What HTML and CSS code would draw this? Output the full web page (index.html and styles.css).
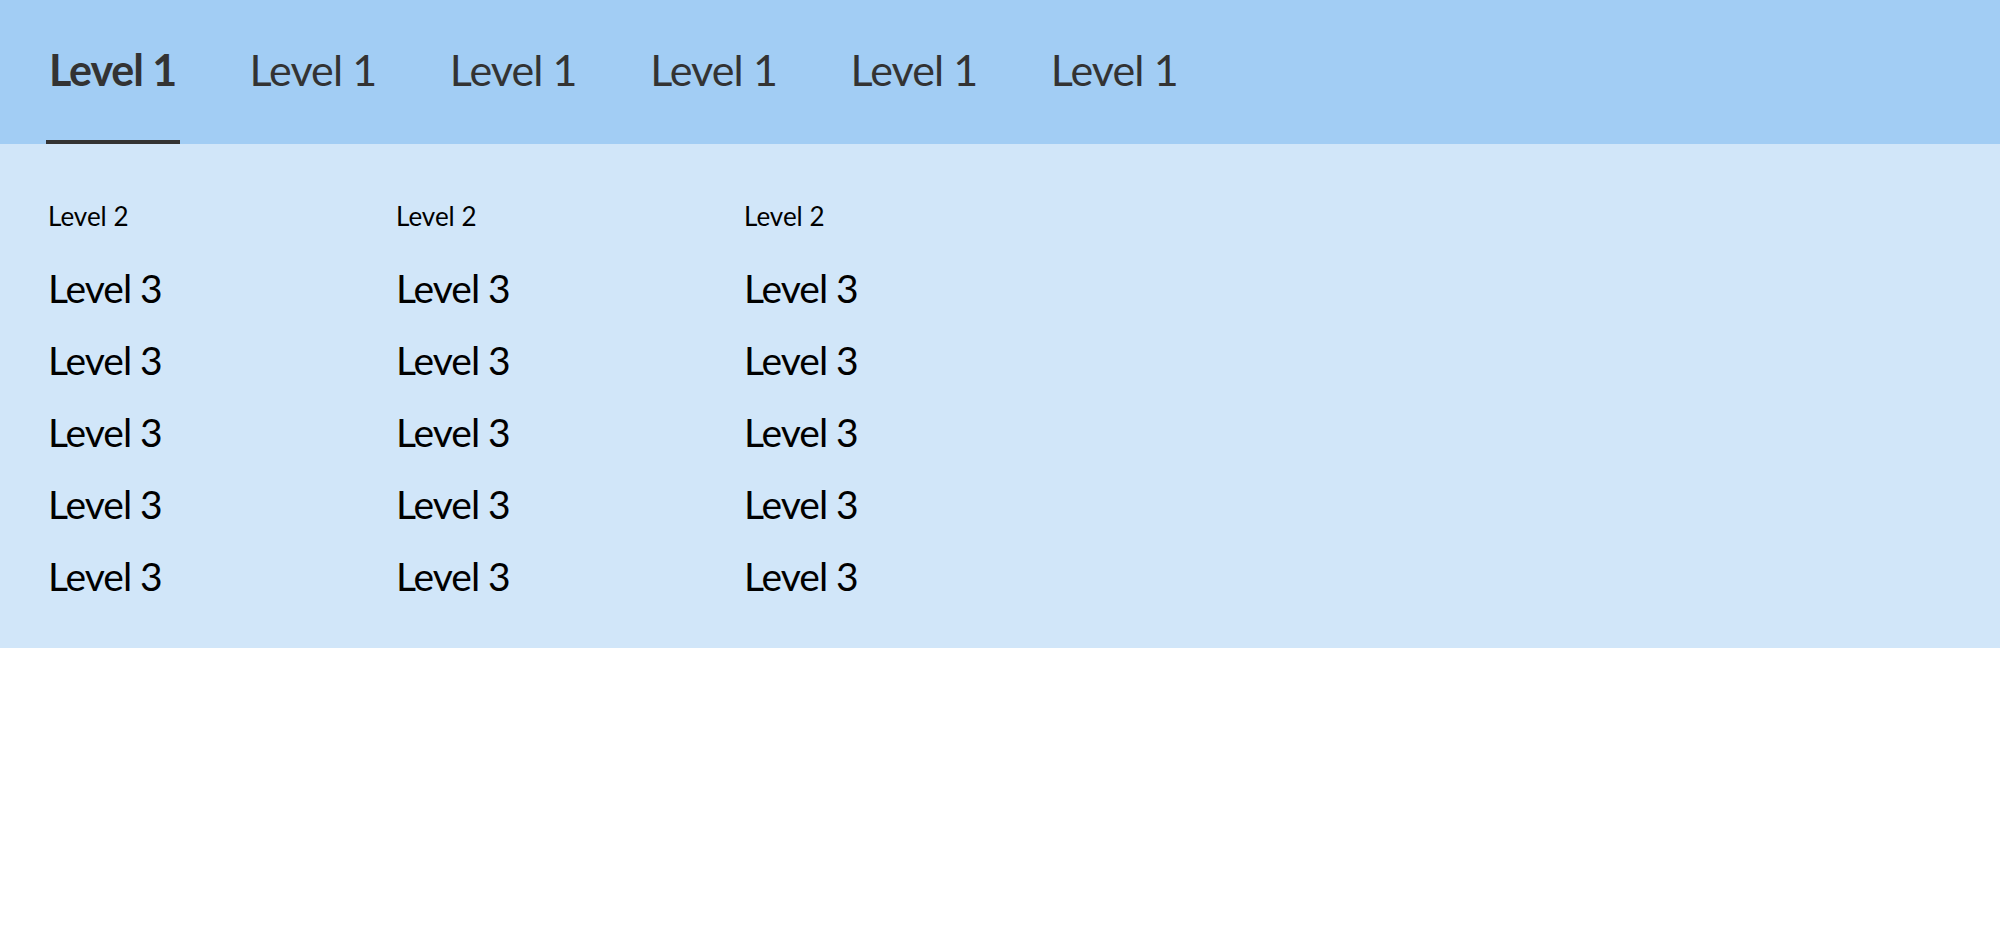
FILE: index.html
```html
<!DOCTYPE html>
<html lang="en">
<head>
  <meta charset="UTF-8">
  <meta name="viewport" content="width=device-width, initial-scale=1.0">
  <title>Mega menu</title>
  <link rel="stylesheet" href="styles.css">
</head>
<body>

  <!-- top level navigation -->
  <nav class="main-nav">
    <ul class="level1">
      <li><a href="#" class="active">Level 1</a></li>
      <li><a href="#">Level 1</a></li>
      <li><a href="#">Level 1</a></li>
      <li><a href="#">Level 1</a></li>
      <li><a href="#">Level 1</a></li>
      <li><a href="#">Level 1</a></li>
    </ul>
  </nav>

  <!-- dropdown panel -->
  <div class="submenu">
    <div class="column">
      <h3 class="level2">Level 2</h3>
      <ul class="level3">
        <li><a href="#">Level 3</a></li>
        <li><a href="#">Level 3</a></li>
        <li><a href="#">Level 3</a></li>
        <li><a href="#">Level 3</a></li>
        <li><a href="#">Level 3</a></li>
      </ul>
    </div>
    <div class="column">
      <h3 class="level2">Level 2</h3>
      <ul class="level3">
        <li><a href="#">Level 3</a></li>
        <li><a href="#">Level 3</a></li>
        <li><a href="#">Level 3</a></li>
        <li><a href="#">Level 3</a></li>
        <li><a href="#">Level 3</a></li>
      </ul>
    </div>
    <div class="column">
      <h3 class="level2">Level 2</h3>
      <ul class="level3">
        <li><a href="#">Level 3</a></li>
        <li><a href="#">Level 3</a></li>
        <li><a href="#">Level 3</a></li>
        <li><a href="#">Level 3</a></li>
        <li><a href="#">Level 3</a></li>
      </ul>
    </div>
  </div>

</body>
</html>
```

FILE: styles.css
```css
/* base */
body {
  margin: 0;
  font-family: Lato, 'Liberation Sans', sans-serif;
  background: #fff;
}

ul {
  list-style: none;
  margin: 0;
  padding: 0;
}

a {
  text-decoration: none;
  color: inherit;
}

/* level 1 bar */
.main-nav {
  background-color: #a2cdf4;
  height: 144px;
  padding-left: 46px;
}

.level1 {
  display: flex;
  gap: 66.5px;
}

.level1 a {
  display: block;
  padding: 0 4px 0 3px;
  font-size: 43px;
  letter-spacing: -0.9px;
  line-height: 140px;
  color: #333;
  border-bottom: 4px solid transparent;
}

.level1 a.active {
  font-weight: bold;
  letter-spacing: -1.1px;
  border-bottom-color: #333;
}

/* dropdown */
.submenu {
  background-color: #d1e6f9;
  padding: 57px 46px 36px 48px;
  display: grid;
  grid-template-columns: repeat(3, 348px);
}

.level2 {
  margin: 0 0 21px;
  font-size: 26px;
  font-weight: normal;
  line-height: 30px;
  color: #000;
}

.level3 a {
  display: block;
  font-size: 39px;
  letter-spacing: -1px;
  line-height: 72px;
  color: #000;
}
```
